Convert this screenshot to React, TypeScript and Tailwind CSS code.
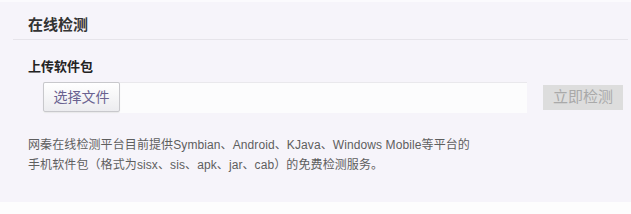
export default function App() {
  const font = { fontFamily: '"Liberation Sans", Arial, "Noto Sans CJK SC", sans-serif' };
  return (
    <div className="w-[631px] h-[214px] bg-[#fdfdfd]" style={font}>
      <div className="h-[202px] bg-[#f6f4fa] border-t-2 border-[#fbfafd]">
        {/* Header */}
        <div className="ml-[13px] mr-[3px] h-[38px] border-b border-[#e6e4ea] pl-[15px] pt-[14px]">
          <h2 className="text-[15px] leading-[18px] font-bold text-[#333]">在线检测</h2>
        </div>

        {/* Upload */}
        <div className="pl-[28px] pt-[19px]">
          <h3 className="text-[13px] leading-[16px] font-bold text-[#222]">上传软件包</h3>
          <div className="flex items-start mt-[7px] ml-[15px]">
            <div className="w-[484px] h-[31px] bg-[#fcfcfd] border-t border-[#e9e8ec] flex items-start">
              <button className="-mt-px h-[30px] w-[77px] rounded-[2px] border border-[#c8c8cc] bg-gradient-to-b from-[#ffffff] to-[#ececef] text-[14px] text-[#6a6290] shadow-[0_1px_1px_rgba(0,0,0,0.08)]">
                选择文件
              </button>
            </div>
            <button className="ml-[16px] mt-[3px] h-[25px] w-[80px] bg-[#dddddd] text-[15px] text-[#a9a9a9]">
              立即检测
            </button>
          </div>
        </div>

        {/* Description */}
        <p className="pl-[28px] pt-[22px] text-[12px] tracking-[0.1px] leading-[20px] text-[#5e5e5e]">
          网秦在线检测平台目前提供Symbian、Android、KJava、Windows Mobile等平台的
          <br />
          手机软件包（格式为sisx、sis、apk、jar、cab）的免费检测服务。
        </p>
      </div>
    </div>
  );
}
